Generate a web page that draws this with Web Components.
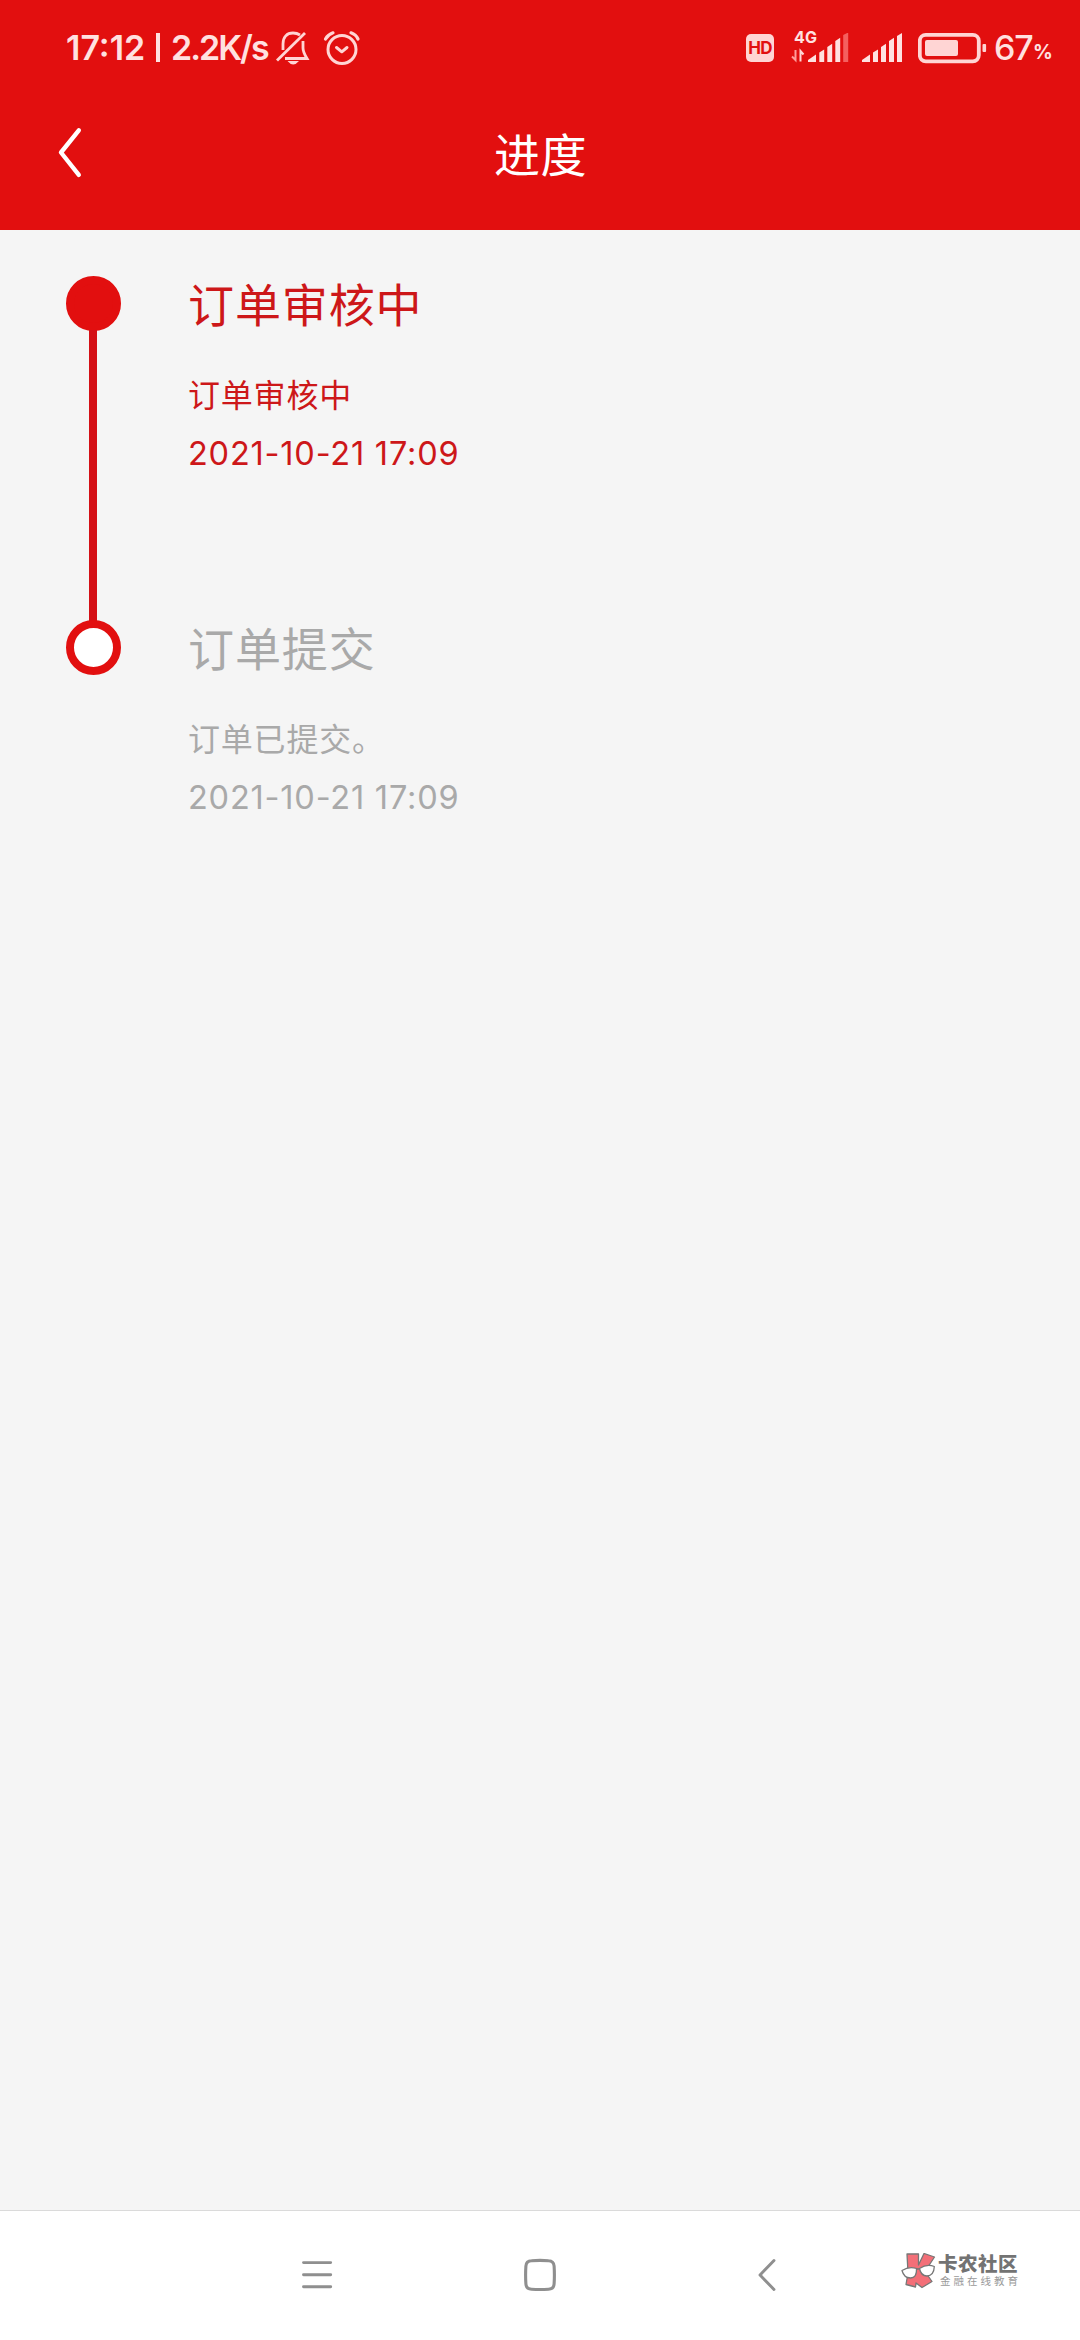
<!DOCTYPE html>
<html lang="zh-CN">
<head>
<meta charset="utf-8">
<title>进度</title>
<style>
html,body{margin:0;padding:0}
body{width:1080px;height:2340px;overflow:hidden;background:#f5f5f5;font-family:"Noto Sans CJK SC",sans-serif}
</style>
</head>
<body>
<progress-page></progress-page>
<script>
const define = (name, html) => customElements.define(name, class extends HTMLElement {
  constructor() {
    super();
    const t = document.createElement('template');
    t.innerHTML = html;
    this.attachShadow({ mode: 'open' }).appendChild(t.content.cloneNode(true));
  }
});

define('status-bar', `
<style>
:host{display:flex;align-items:flex-start;height:80px;box-sizing:border-box;padding:15px 0 0 66px;color:#ffe1e0;font-family:Inter,sans-serif;font-weight:600}
svg{display:block;flex:none}
.t{font-size:34px;line-height:65px;white-space:pre;flex:none;height:65px}
.clock{width:82px;letter-spacing:0}
.bar{width:4px;height:29px;margin:18px 11px 0 8px;background:#ffe1e0;flex:none}
.rate{width:99px;letter-spacing:-2px}
.grow{flex:1}
.hd{width:28px;height:28px;border-radius:5px;background:#ffd5d4;color:#e20f0f;font:700 17px/29px Inter,sans-serif;text-align:center;margin-top:19px;letter-spacing:-.8px;flex:none}
.cell{width:58px;height:65px;margin-left:17px;flex:none;display:flex;flex-direction:column}
.g{font:700 16px/18px Inter,sans-serif;height:18px;padding-left:3px;margin-top:13px;letter-spacing:.2px}
.cell svg{margin-top:-13px}
.pct{width:39px;margin-left:7px;letter-spacing:-1.2px;font-weight:500}
.sm{font-size:19.5px;font-weight:700;letter-spacing:-1px;line-height:75px;width:36px;height:65px;flex:none}
</style>
<span class="t clock">17:12</span><i class="bar"></i><span class="t rate">2.2K/s</span>
<svg style="margin-left:6px" width="34" height="65" viewBox="276 15 34 65" fill="none" stroke="#ffd5d4" stroke-width="2.8">
<path d="M277 60.5 305 33"/><path d="M283 50V44C283 37 287 33 293 33Q297 33 300 35M303 41V48Q303 52 307 58.5H285"/><path d="M287.5 61H299Q296 64.5 293.2 64.5T287.5 61Z" fill="#ffd5d4" stroke="none"/></svg>
<svg style="margin-left:13px" width="38" height="65" viewBox="323 15 38 65" fill="none" stroke="#ffd5d4" stroke-width="3" stroke-linecap="round">
<circle cx="342" cy="49.5" r="14"/><path d="M336.5 47.5 341.8 51.8 347 47.5" stroke-linejoin="round"/><path d="M325.5 39Q328 34.5 333 32.8M351 32.8Q356 34.5 358 39" stroke-width="3.2"/></svg>
<span class="grow"></span>
<span class="hd">HD</span>
<div class="cell"><span class="g">4G</span>
<svg width="58" height="47" viewBox="790 33 58 47">
<g fill="none" stroke="#ff9d9b" stroke-width="2"><path d="M794.5 50V60L791 56.5"/><path d="M799.5 61.5V51L802.5 54.5" stroke="#ffd5d4"/></g>
<g fill="#ffe1e0"><path d="M807 62V60L815 54.5V62Z"/><path d="M818.3 62V52.5L823.2 49.5V62Z"/><path d="M826.3 62V47L831.2 43.8V62Z"/><path d="M834.3 62V41L839.2 37.8V62Z"/></g><path d="M842.2 62V35L847.2 32.5V62Z" fill="#f4605f"/></svg></div>
<svg style="margin-left:13px" width="41" height="65" viewBox="861 15 41 65" fill="#ffe1e0"><path d="M861 62V60L869 54.5V62Z"/><path d="M872 62V52.5L877 49.5V62Z"/><path d="M880 62V47L885 43.8V62Z"/><path d="M888 62V41L893 37.8V62Z"/><path d="M896 62V36L901 33V62Z"/></svg>
<svg style="margin-left:15px" width="69" height="65" viewBox="917 15 69 65"><rect x="918.8" y="34.8" width="59" height="26.5" rx="6" fill="none" stroke="#ffd5d4" stroke-width="3.8"/><rect x="924" y="40" width="33" height="16" rx="2" fill="#ffd5d4"/><rect x="981.5" y="44" width="3.6" height="8" rx="1" fill="#ffd5d4"/></svg>
<span class="t pct">67</span><span class="sm">%</span>
<span style="width:11px;flex:none"></span>
`);

define('title-bar', `
<style>
:host{display:flex;align-items:center;height:150px;box-sizing:border-box;color:#fff}
svg{display:block;margin-left:56px}
h1{flex:1;margin:0 83px 0 0;text-align:center;font-weight:400;font-size:46px;line-height:60px;height:66px;letter-spacing:.5px}
</style>
<svg width="28" height="150" viewBox="56 80 28 150" fill="none" stroke="#fff" stroke-width="4.4" stroke-linecap="round" stroke-linejoin="round"><path d="M78.8 130.3 61 152.5 78.8 174.8"/></svg>
<h1><slot></slot></h1>
`);

define('progress-step', `
<style>
:host{display:flex;height:344px;color:#a9a9a9}
:host([active]){color:#cd1719}
.rail{width:55px;display:flex;flex-direction:column;align-items:center;margin-right:67px}
.dot{box-sizing:border-box;width:55px;height:55px;border:8px solid #e20f0f;border-radius:50%;background:#fff;flex:none}
:host([active]) .dot{background:#e20f0f}
.line{display:none;width:8px;flex:1;background:#d41016;margin:-1px 1px -1px 0}
:host([active]) .line{display:block}
.title{font-size:46px;line-height:53px;height:54px;letter-spacing:.9px;white-space:nowrap}
.note{font-size:32px;line-height:39px;height:40px;margin-top:44px;letter-spacing:.8px;white-space:nowrap}
.date{font:400 32.5px/40px Inter,sans-serif;height:40px;margin-top:20px;white-space:nowrap;letter-spacing:.8px}
</style>
<div class="rail"><div class="dot"></div><div class="line"></div></div>
<div><div class="title"><slot name="title"></slot></div><div class="note"><slot name="note"></slot></div><div class="date"><slot name="date"></slot></div></div>
`);

define('brand-mark', `
<style>
:host{display:flex;height:36px;align-items:flex-start}
svg{display:block;flex:none}
.n{font-weight:900;font-size:19.5px;line-height:20px;height:21px;color:#737373;white-space:nowrap;letter-spacing:.5px}
.s{font-size:10.5px;line-height:13px;color:#9a9a9a;letter-spacing:3px;white-space:nowrap;margin-left:2px}
</style>
<svg width="38" height="36" viewBox="899 2253 38 36" stroke="#777" stroke-width="1.3" stroke-linejoin="round"><path d="M906 2254 917.5 2253.8V2265L923 2253.5 933.5 2257 924 2271.5 931 2281.5 921 2287.5 915 2283 914.5 2287 905 2284.5 907 2273Z" fill="#f36f78"/><path d="M901 2270.5Q908 2266 915.5 2268.5 916 2278 909.5 2278 903 2278 901 2270.5ZM918.5 2268.5Q926 2263.5 933.3 2266.5 933 2275.5 926 2276 920 2276 918.5 2268.5Z" fill="#fff"/><path d="M915.5 2269.5Q917 2268 918.5 2269.5" fill="none"/></svg>
<div><div class="n">卡农社区</div><div class="s">金融在线教育</div></div>
`);

define('nav-bar', `
<style>
:host{display:flex;align-items:flex-start;height:130px;box-sizing:border-box;border-top:1px solid #dadada;background:#fff}
svg{display:block;flex:none;margin-top:44px}
brand-mark{margin:42px 0 0 120px}
</style>
<svg style="margin-left:297px" width="40" height="40" viewBox="297 2255 40 40" stroke="#8f8f8f" stroke-width="2.9" stroke-linecap="round"><path d="M303.5 2262.6H330.7M303.5 2274.7H330.7M303.5 2286.7H330.7"/></svg>
<svg style="margin-left:183px" width="40" height="40" viewBox="520 2255 40 40" fill="none" stroke="#8f8f8f" stroke-width="3.1"><path d="M531.5 2260.7Q540 2260 548.5 2260.7 553.8 2261 554.1 2266 554.7 2275 554.1 2284 553.8 2288.9 548.5 2289.2 540 2289.9 531.5 2289.2 526.2 2288.9 525.9 2284 525.3 2275 525.9 2266 526.2 2261 531.5 2260.7Z"/></svg>
<svg style="margin-left:195px" width="25" height="40" viewBox="755 2255 25 40" fill="none" stroke="#8f8f8f" stroke-width="2.9" stroke-linecap="round" stroke-linejoin="round"><path d="M774 2260.5 760 2275 774 2289.5"/></svg>
<brand-mark></brand-mark>
`);

define('progress-page', `
<style>
:host{display:flex;flex-direction:column;width:1080px;height:2340px;background:#f5f5f5}
header{background:#e20f0f;height:230px;flex:none}
main{flex:1;padding:46px 0 0 66px}
</style>
<header><status-bar></status-bar><title-bar>进度</title-bar></header>
<main>
<progress-step active><span slot="title">订单审核中</span><span slot="note">订单审核中</span><span slot="date">2021-10-21 17:09</span></progress-step>
<progress-step><span slot="title">订单提交</span><span slot="note">订单已提交。</span><span slot="date">2021-10-21 17:09</span></progress-step>
</main>
<nav-bar></nav-bar>
`);
</script>
</body>
</html>
